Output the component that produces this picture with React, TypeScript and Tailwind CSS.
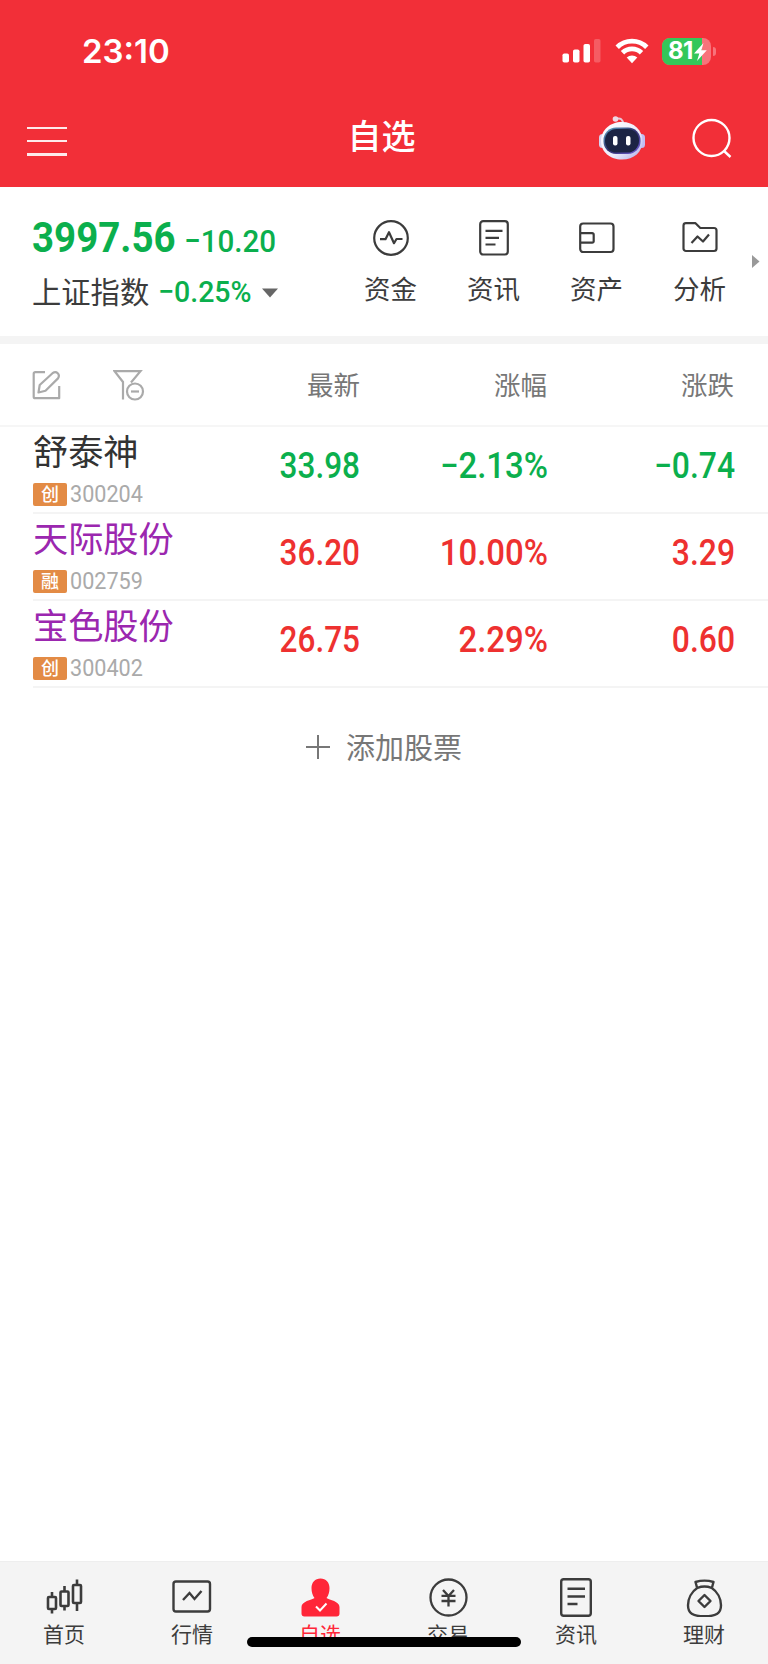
import type { ReactNode } from "react";
import clsx from "clsx";

type Stock = {
  name: string;
  code: string;
  tag: string;
  price: string;
  percent: string;
  change: string;
  up: boolean;
};

const stocks: Stock[] = [
  { name: "舒泰神", code: "300204", tag: "创", price: "33.98", percent: "−2.13%", change: "−0.74", up: false },
  { name: "天际股份", code: "002759", tag: "融", price: "36.20", percent: "10.00%", change: "3.29", up: true },
  { name: "宝色股份", code: "300402", tag: "创", price: "26.75", percent: "2.29%", change: "0.60", up: true },
];

function StatusBar() {
  return (
    <div className="flex h-[102px] items-center justify-between pl-[82px] pr-[52px]">
      <span className="font-['Inter'] text-[33px] leading-none font-semibold">23:10</span>
      <div className="flex items-center">
        <svg width="40" height="26" viewBox="0 0 40 26" fill="#fff">
          <rect x="0.5" y="15.5" width="6.5" height="9" rx="1.8" />
          <rect x="11" y="11.5" width="6.5" height="13" rx="1.8" />
          <rect x="21.5" y="6" width="6.5" height="18.5" rx="1.8" />
          <rect x="32" y="1" width="6.5" height="23.5" rx="1.8" opacity="0.22" />
        </svg>
        <svg className="ml-[13px]" width="34" height="26" viewBox="0 0 34 26" fill="none" stroke="#fff" strokeWidth="4.8">
          <path d="M2.2 9.3a21 21 0 0 1 29.6 0" />
          <path d="M7.5 14.8a13.4 13.4 0 0 1 19 0" />
          <path d="M17 25.2l-5.3-5.6a7.6 7.6 0 0 1 10.6 0z" fill="#fff" stroke="none" />
        </svg>
        <div className="relative ml-[13px] flex h-[27px] w-[49px] items-center overflow-hidden rounded-[8px] bg-[#f8737b]">
          <div className="absolute inset-y-0 left-0 w-10 bg-[#34c759]" />
          <span className="relative ml-[6px] font-['Inter'] text-[24px] leading-none font-bold tracking-[-0.5px]">81</span>
          <svg className="absolute top-[5px] left-[32px]" width="13" height="18" viewBox="0 0 13 18" fill="#fff">
            <path d="M9.5 0L0 10.5h5.3L3 18l9.8-10.7H7.4z" />
          </svg>
        </div>
        <div className="ml-[2px] h-[9px] w-[3px] rounded-r-full bg-[#f8737b]" />
      </div>
    </div>
  );
}

function Robot() {
  return (
    <svg width="48" height="46" viewBox="0 0 48 46">
      <defs>
        <linearGradient id="shell" x1="0" y1="0" x2="1" y2="1">
          <stop offset="0" stopColor="#fff" />
          <stop offset="0.6" stopColor="#ecebfb" />
          <stop offset="1" stopColor="#aaa9e6" />
        </linearGradient>
        <linearGradient id="visor" x1="0" y1="0" x2="1" y2="1">
          <stop offset="0" stopColor="#62a8c5" />
          <stop offset="0.5" stopColor="#30306e" />
          <stop offset="1" stopColor="#7561dc" />
        </linearGradient>
      </defs>
      <path d="M18 4q7-2 7 5" fill="none" stroke="#e5c8d8" strokeWidth="2" />
      <circle cx="17.5" cy="4" r="2.8" fill="#eed9e5" />
      <rect x="1" y="19" width="7" height="14" rx="3.5" fill="#d5d3f0" />
      <rect x="40" y="19" width="7" height="14" rx="3.5" fill="#c2bdf2" />
      <path d="M24 7C36 7 44.5 15 44.5 26S36 44.500 24 44.500 3 37 3 26 12 7 24 7z" fill="url(#shell)" />
      <rect x="5.5" y="12.5" width="37" height="26.500" rx="12.5" fill="url(#visor)" />
      <rect x="7" y="14" width="34" height="23.5" rx="11.5" fill="#1c2444" />
      <rect x="15" y="21" width="4.5" height="9.5" rx="2" fill="#fff" />
      <rect x="28" y="21" width="4.5" height="9.5" rx="2" fill="#fff" />
    </svg>
  );
}

function NavBar() {
  return (
    <div className="flex h-[85px] items-start justify-between pr-[36px] pl-[27px]">
      <div className="mt-[24.5px] flex h-[29px] w-[138px] flex-col justify-between">
        <div className="h-[2.5px] w-10 bg-white/90" />
        <div className="h-[2.5px] w-10 bg-white/90" />
        <div className="h-[2.5px] w-10 bg-white/90" />
      </div>
      <h1 className="mt-[12px] text-[34px] leading-[42px] font-medium">自选</h1>
      <div className="mt-[13px] flex w-[134px] items-start justify-between">
        <Robot />
        <svg className="mt-[3px]" width="41" height="41" viewBox="0 0 41 41" fill="none" stroke="#fff" strokeWidth="2.4">
          <circle cx="20.5" cy="20" r="18" />
          <path d="M32.5 32.5l7 6.5" />
        </svg>
      </div>
    </div>
  );
}

const shortcuts: { label: string; icon: ReactNode }[] = [
  {
    label: "资金",
    icon: (
      <svg width="36" height="36" viewBox="0 0 36 36" fill="none" stroke="#3c3c3c" strokeWidth="2.2" strokeLinejoin="round">
        <circle cx="18" cy="18" r="16.8" />
        <path d="M7 19.2h5.5l3.500-7 5 11 2.500-4.200h6" />
      </svg>
    ),
  },
  {
    label: "资讯",
    icon: (
      <svg width="30" height="36" viewBox="0 0 30 36" fill="none" stroke="#3c3c3c" strokeWidth="2.2">
        <rect x="1.2" y="1.2" width="27.600" height="33.3" rx="3" />
        <path d="M6.5 10.8H23.500M6.5 17.8H20M6.5 24.5H16.500" />
      </svg>
    ),
  },
  {
    label: "资产",
    icon: (
      <svg width="36" height="32" viewBox="0 0 36 32" fill="none" stroke="#3c3c3c" strokeWidth="2.2">
        <rect x="1.2" y="1.5" width="33.3" height="28.5" rx="3" />
        <path d="M1.2 11.2h12a1.500 1.500 0 0 1 1.500 1.500v6.500a1.500 1.500 0 0 1-1.500 1.500h-12" />
      </svg>
    ),
  },
  {
    label: "分析",
    icon: (
      <svg width="36" height="32" viewBox="0 0 36 32" fill="none" stroke="#3c3c3c" strokeWidth="2.2" strokeLinejoin="round">
        <path d="M4 1.2h9.500l4.800 4.800H32a2.500 2.500 0 0 1 2.500 2.500v18a2.500 2.500 0 0 1-2.500 2.500H4a2.500 2.500 0 0 1-2.500-2.500v-23A2.500 2.500 0 0 1 4 1.200z" />
        <path d="M9.500 21l6-6.500 5.500 5 6-7" />
      </svg>
    ),
  },
];

function IndexBar() {
  return (
    <section className="flex h-[157px] items-start border-b-[8px] border-[#f4f4f4] pl-[32px]">
      <div className="w-[307px] pt-[25px] text-[#0baf4d]">
        <div className="flex h-[50px] items-baseline font-['Roboto'] whitespace-nowrap">
          <span className="w-[152px] origin-left scale-x-[0.895] text-[43px] leading-[50px] font-bold">3997.56</span>
          <span className="origin-left scale-x-[0.925] text-[32px] leading-[50px] font-medium">−10.20</span>
        </div>
        <div className="mt-[7px] flex h-[44px] items-center whitespace-nowrap">
          <span className="w-[126px] text-[29.3px] text-[#3c3c3c]">上证指数</span>
          <span className="w-[104px] origin-left scale-x-[0.95] pt-[1px] font-['Roboto'] text-[30px] font-medium">−0.25%</span>
          <svg className="mt-[3px]" width="16" height="10" viewBox="0 0 16 10" fill="#666">
            <path d="M0 0.5h16L8 9.5z" />
          </svg>
        </div>
      </div>
      <div className="flex pt-[33px]">
        {shortcuts.map((item) => (
          <div key={item.label} className="flex w-[103px] flex-col items-center">
            <div className="flex h-[36px] items-center">{item.icon}</div>
            <span className="mt-[14px] text-[26.5px] leading-[36px] text-[#3c3c3c]">{item.label}</span>
          </div>
        ))}
      </div>
      <svg className="mt-[68px] ml-[1px] shrink-0" width="8" height="13" viewBox="0 0 8 13" fill="#999">
        <path d="M0 0l7.500 6.500L0 13z" />
      </svg>
    </section>
  );
}

function TableHead() {
  return (
    <div className="flex h-[83px] items-center border-b-2 border-[#f6f6f6] pl-[32px] text-[26.5px] text-[#777]">
      <div className="flex w-[140px] items-center">
        <svg width="30" height="30" viewBox="0 0 30 30" fill="none" stroke="#aaa" strokeWidth="2.2" strokeLinejoin="round">
          <path d="M13 2.2H3.200a1.500 1.500 0 0 0-1.500 1.500v23a1.500 1.500 0 0 0 1.500 1.500h24V16" />
          <path d="M6.500 22.500l1.200-7.500L20.500 3.200q3-2.200 5.200 0t.3 5.200L13.500 20.800z" />
        </svg>
        <svg className="ml-[51px]" width="32" height="32" viewBox="0 0 32 32" fill="none" stroke="#aaa" strokeWidth="2.2">
          <path d="M10 30.500V13L1.500 2.200H27.500L18 13.500" />
          <circle cx="22" cy="22.500" r="8" />
          <path d="M18 22.500h8" />
        </svg>
      </div>
      <span className="-mt-[2px] w-[188px] text-right">最新</span>
      <span className="-mt-[2px] w-[187px] text-right">涨幅</span>
      <span className="-mt-[2px] w-[187px] text-right">涨跌</span>
    </div>
  );
}

function StockRow({ stock }: { stock: Stock }) {
  const tone = stock.up ? "text-[#ee3130]" : "text-[#0baf4d]";
  const figure = "origin-right text-right font-['Roboto'] text-[36px] leading-[44px] font-medium";

  return (
    <div className="ml-[33px] flex h-[87px] items-start border-b-2 border-[#f4f4f4]">
      <div className="w-[150px] pt-px whitespace-nowrap">
        <div className={clsx("text-[35.2px] leading-[44px]", stock.up ? "text-[#9b27af]" : "text-[#333]")}>
          {stock.name}
        </div>
        <div className="mt-[10px] flex items-center">
          <span className="flex h-[23px] w-[34px] items-center justify-center rounded-[2px] bg-[#e38b45] pb-[2px] text-[18px] leading-none font-medium text-white">
            {stock.tag}
          </span>
          <span className="ml-[3px] origin-left scale-x-[0.9] pt-[1px] font-['Roboto'] text-[24px] leading-[23px] text-[#aaa]">
            {stock.code}
          </span>
        </div>
      </div>
      <div className={clsx("flex pt-[17px]", tone)}>
        <span className={clsx("w-[177px] scale-x-[0.875]", figure)}>{stock.price}</span>
        <span className={clsx("w-[188px] scale-x-[0.915]", figure)}>{stock.percent}</span>
        <span className={clsx("w-[187px] scale-x-[0.885]", figure)}>{stock.change}</span>
      </div>
    </div>
  );
}

const tabs: { label: string; icon: ReactNode }[] = [
  {
    label: "首页",
    icon: (
      <svg width="37" height="38" viewBox="0 0 37 38" fill="none" stroke="#3c3c3c" strokeWidth="2.6">
        <path d="M6 14v5M6 31v4.500M18.500 8v5.500M18.500 28v4.500M31 1.500V7M31 25v8" />
        <rect x="2" y="19" width="8" height="12" rx="1" />
        <rect x="14.500" y="13.500" width="8" height="14.500" rx="1" />
        <rect x="27" y="7" width="8" height="18" rx="1" />
      </svg>
    ),
  },
  {
    label: "行情",
    icon: (
      <svg width="40" height="38" viewBox="0 0 40 38" fill="none" stroke="#3c3c3c" strokeWidth="2.4">
        <rect x="1.500" y="3.500" width="36.500" height="30" rx="2.500" />
        <path d="M11 22l6.500-7 5 6 7-8" />
      </svg>
    ),
  },
  {
    label: "自选",
    icon: (
      <svg width="39" height="39" viewBox="0 0 39 39" fill="#ff2638">
        <path d="M19.500 0.500c5.500 0 9 4 9 9.500 0 4-1 7.500-3 10 3 1.800 13 3.500 13 9v6.500a3 3 0 0 1-3 3h-32a3 3 0 0 1-3-3V29c0-5.500 10-7.200 13-9-2-2.500-3-6-3-10 0-5.500 3.500-9.500 9-9.500z" />
        <path d="M15 28.500l4 4 6.500-7" fill="none" stroke="#fff" strokeWidth="2" />
      </svg>
    ),
  },
  {
    label: "交易",
    icon: (
      <svg width="39" height="39" viewBox="0 0 39 39" fill="none" stroke="#3c3c3c" strokeWidth="2.3">
        <circle cx="19.500" cy="19.500" r="18" />
        <path d="M14 12l5.500 6 5.500-6M19.500 18v10.500M12.500 17.800h14M12.500 23h14" />
      </svg>
    ),
  },
  {
    label: "资讯",
    icon: (
      <svg width="32" height="39" viewBox="0 0 32 39" fill="none" stroke="#3c3c3c" strokeWidth="2.4">
        <rect x="1.2" y="1.200" width="29.600" height="36.600" rx="2.500" />
        <path d="M7.500 10.800H25M7.500 18.500H25M7.500 26H17.500" />
      </svg>
    ),
  },
  {
    label: "理财",
    icon: (
      <svg width="37" height="39" viewBox="0 0 37 39" fill="none" stroke="#3c3c3c" strokeWidth="2.4" strokeLinejoin="round">
        <path d="M11 9.500L9.500 4q9-2.800 18 0L26 9.500" />
        <path d="M11.500 9.800q7-2.500 14 0c6 4 9.500 11 9.500 17.500 0 8-4.500 11-16.500 11S2 35.300 2 27.300c0-6.500 3.500-13.500 9.500-17.500z" />
        <path d="M18.500 17l6 6-6 6-6-6z" />
      </svg>
    ),
  },
];

function TabBar() {
  return (
    <nav className="relative flex h-[103px] border-t border-[#eee] bg-[#f4f4f4] pt-[15px]">
      {tabs.map((tab) => (
        <div key={tab.label} className="flex w-[128px] flex-col items-center">
          <div className="flex h-[40px] items-center">{tab.icon}</div>
          <span className={clsx("text-[21px] leading-[32px]", tab.label === "自选" ? "text-[#ff2638]" : "text-[#3c3c3c]")}>
            {tab.label}
          </span>
        </div>
      ))}
      {/* Home indicator */}
      <div className="absolute bottom-[17px] left-[247px] h-[10px] w-[274px] rounded-full bg-black" />
    </nav>
  );
}

export default function App() {
  return (
    <div className="flex h-[1664px] w-[768px] flex-col overflow-hidden bg-white font-['Noto_Sans_CJK_SC',sans-serif]">
      <header className="h-[187px] shrink-0 bg-[#f22f38] text-white">
        <StatusBar />
        <NavBar />
      </header>
      <IndexBar />
      <TableHead />
      <main className="flex-1">
        {stocks.map((stock) => (
          <StockRow key={stock.code} stock={stock} />
        ))}
        <div className="mt-[37px] flex items-center justify-center text-[29px] leading-[44px] text-[#777]">
          <svg className="mr-[16px]" width="24" height="24" viewBox="0 0 24 24" stroke="#777" strokeWidth="2">
            <path d="M12 0v24M0 12h24" />
          </svg>
          <span className="-mt-px">添加股票</span>
        </div>
      </main>
      <TabBar />
    </div>
  );
}
